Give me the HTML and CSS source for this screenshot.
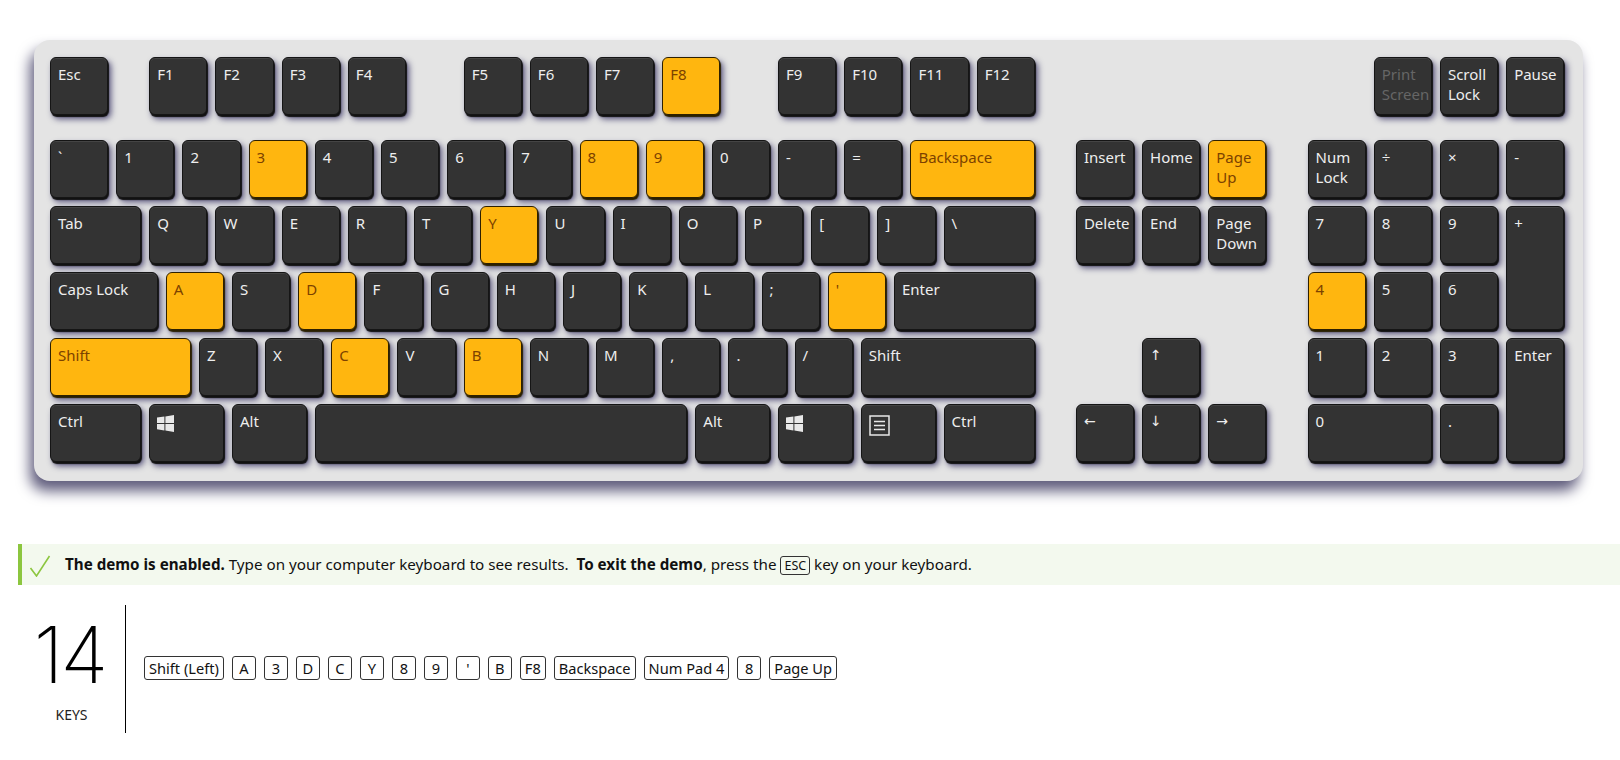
FILE: index.html
```html
<!DOCTYPE html>
<html lang="en">
<head>
    <meta charset="UTF-8">
    <title>Keyboard demo</title>
    <link rel="stylesheet" href="styles.css">
</head>
<body>
    <div class="keyboard">
        <!-- Function row -->
        <div class="key-grid fn-row">
            <div class="key s4">Esc</div><div class="s2"></div>
            <div class="key s4">F1</div><div class="key s4">F2</div><div class="key s4">F3</div><div class="key s4">F4</div><div class="s3"></div>
            <div class="key s4">F5</div><div class="key s4">F6</div><div class="key s4">F7</div><div class="key s4 on">F8</div><div class="s3"></div>
            <div class="key s4">F9</div><div class="key s4">F10</div><div class="key s4">F11</div><div class="key s4">F12</div><div class="s20"></div>
            <div class="key s4 dim">Print Screen</div><div class="key s4">Scroll Lock</div><div class="key s4">Pause</div>
        </div>

        <div class="key-grid">
            <!-- Number row -->
            <div class="key s4">`</div><div class="key s4">1</div><div class="key s4">2</div><div class="key s4 on">3</div><div class="key s4">4</div><div class="key s4">5</div><div class="key s4">6</div><div class="key s4">7</div><div class="key s4 on">8</div><div class="key s4 on">9</div><div class="key s4">0</div><div class="key s4">-</div><div class="key s4">=</div><div class="key s8 on">Backspace</div><div class="s2"></div>
            <div class="key s4">Insert</div><div class="key s4">Home</div><div class="key s4 on">Page Up</div><div class="s2"></div>
            <div class="key s4">Num Lock</div><div class="key s4">÷</div><div class="key s4">×</div><div class="key s4">-</div>

            <!-- QWERTY row -->
            <div class="key s6">Tab</div><div class="key s4">Q</div><div class="key s4">W</div><div class="key s4">E</div><div class="key s4">R</div><div class="key s4">T</div><div class="key s4 on">Y</div><div class="key s4">U</div><div class="key s4">I</div><div class="key s4">O</div><div class="key s4">P</div><div class="key s4">[</div><div class="key s4">]</div><div class="key s6">\</div><div class="s2"></div>
            <div class="key s4">Delete</div><div class="key s4">End</div><div class="key s4">Page Down</div><div class="s2"></div>
            <div class="key s4">7</div><div class="key s4">8</div><div class="key s4">9</div><div class="key s4 tall">+</div>

            <!-- Home row -->
            <div class="key s7">Caps Lock</div><div class="key s4 on">A</div><div class="key s4">S</div><div class="key s4 on">D</div><div class="key s4">F</div><div class="key s4">G</div><div class="key s4">H</div><div class="key s4">J</div><div class="key s4">K</div><div class="key s4">L</div><div class="key s4">;</div><div class="key s4 on">'</div><div class="key s9">Enter</div><div class="s16"></div>
            <div class="key s4 on">4</div><div class="key s4">5</div><div class="key s4">6</div>

            <!-- Shift row -->
            <div class="key s9 on">Shift</div><div class="key s4">Z</div><div class="key s4">X</div><div class="key s4 on">C</div><div class="key s4">V</div><div class="key s4 on">B</div><div class="key s4">N</div><div class="key s4">M</div><div class="key s4">,</div><div class="key s4">.</div><div class="key s4">/</div><div class="key s11">Shift</div><div class="s6"></div>
            <div class="key s4 arrow">↑</div><div class="s6"></div>
            <div class="key s4">1</div><div class="key s4">2</div><div class="key s4">3</div><div class="key s4 tall">Enter</div>

            <!-- Bottom row -->
            <div class="key s6">Ctrl</div>
            <div class="key s5">
                <svg class="win-icon" viewBox="0 0 17 17"><path d="M0 2.6 7.4 1.5V8H0ZM8.4 1.4 17 0V8H8.4ZM0 9H7.4V15.4L0 14.3ZM8.4 9H17V17L8.4 15.6Z"/></svg>
            </div>
            <div class="key s5">Alt</div><div class="key s23"></div><div class="key s5">Alt</div>
            <div class="key s5">
                <svg class="win-icon" viewBox="0 0 17 17"><path d="M0 2.6 7.4 1.5V8H0ZM8.4 1.4 17 0V8H8.4ZM0 9H7.4V15.4L0 14.3ZM8.4 9H17V17L8.4 15.6Z"/></svg>
            </div>
            <div class="key s5">
                <svg class="menu-icon" viewBox="0 0 21 21"><path d="M1 1H20V20H1ZM5 6.5H16M5 10.5H16M5 14.5H16"/></svg>
            </div>
            <div class="key s6">Ctrl</div><div class="s2"></div>
            <div class="key s4 arrow">←</div><div class="key s4 arrow">↓</div><div class="key s4 arrow">→</div><div class="s2"></div>
            <div class="key s8">0</div><div class="key s4">.</div>
        </div>
    </div>

    <div class="notice">
        <svg class="notice-check" viewBox="0 0 22 22"><path d="M1.5 13 7.5 21 20.5 1"/></svg>
        <p><b>The demo is enabled.</b> Type on your computer keyboard to see results. &nbsp;<b>To exit the demo</b>, press the <kbd class="esc">ESC</kbd> key on your keyboard.</p>
    </div>

    <div class="results">
        <div class="count">
            <div class="count-num">14</div>
            <div class="count-label">KEYS</div>
        </div>
        <div class="chips">
            <kbd>Shift (Left)</kbd><kbd>A</kbd><kbd>3</kbd><kbd>D</kbd><kbd>C</kbd><kbd>Y</kbd><kbd>8</kbd><kbd>9</kbd><kbd>'</kbd><kbd>B</kbd><kbd>F8</kbd><kbd>Backspace</kbd><kbd>Num Pad 4</kbd><kbd>8</kbd><kbd>Page Up</kbd>
        </div>
    </div>
</body>
</html>
```

FILE: styles.css
```css
* {
    box-sizing: border-box;
}
html, body {
    height: 100%;
}
body {
    margin: 0;
    overflow: hidden;
    background: #fff;
    color: #111;
    font-family: "Noto Sans", "Open Sans", sans-serif;
}
.keyboard {
    width: 1549px;
    height: 441px;
    margin: 40px 0 0 34px;
    padding: 17px 0 0 16px;
    background: #e4e4e4;
    border-radius: 16px;
    box-shadow: -4px 10px 14px #5f5c7c;
}
.key-grid {
    display: grid;
    grid-template-columns: repeat(92, 16.56px);
    grid-auto-rows: 66px;
}
.fn-row {
    margin-bottom: 17px;
}
.key {
    margin: 0 8px 8px 0;
    padding: 6px 7px;
    background: #333;
    border: 1px solid #151515;
    border-radius: 6px;
    box-shadow: 1px 2px 1px #111, 3px 4px 6px #55517a, inset 0 1px 0 #444;
    color: #eee;
    font-size: 15px;
    line-height: 20px;
}
.key.on {
    background: #ffb60f;
    border-color: #2e2000;
    box-shadow: 1px 2px 1px #2a2000, 3px 4px 6px #55517a;
    color: #7c4200;
}
.key.dim {
    color: #666;
}
.arrow {
    font-family: "DejaVu Sans", sans-serif;
    font-size: 14px;
}
.tall {
    grid-row: span 2;
}
.s2 { grid-column: span 2; }
.s3 { grid-column: span 3; }
.s4 { grid-column: span 4; }
.s5 { grid-column: span 5; }
.s6 { grid-column: span 6; }
.s7 { grid-column: span 7; }
.s8 { grid-column: span 8; }
.s9 { grid-column: span 9; }
.s11 { grid-column: span 11; }
.s16 { grid-column: span 16; }
.s20 { grid-column: span 20; }
.s23 { grid-column: span 23; }
.win-icon {
    display: block;
    width: 17px;
    height: 17px;
    margin-top: 4px;
    fill: #e8e8e8;
}
.menu-icon {
    display: block;
    width: 21px;
    height: 21px;
    margin-top: 4px;
    fill: none;
    stroke: #e8e8e8;
    stroke-width: 1.5;
}
.notice {
    display: flex;
    align-items: center;
    height: 41px;
    margin: 63px 0 0 18px;
    padding-left: 7px;
    background: #f3f9ee;
    border-left: 4px solid #8cc63f;
}
.notice-check {
    width: 22px;
    height: 22px;
    margin: 2px 14px 0 0;
    fill: none;
    stroke: #8cc63f;
    stroke-width: 1.6;
}
.notice p {
    margin: -2px 0 0;
    font-size: 15.2px;
}
.esc {
    padding: 0 3px;
    border: 1px solid #333;
    border-radius: 3px;
    font-family: inherit;
    font-size: 12.5px;
}
.results {
    display: flex;
    align-items: center;
    margin: 20px 0 0 18px;
}
.count {
    width: 108px;
    height: 128px;
    border-right: 1px solid #000;
    text-align: center;
}
.count-num {
    margin: 4px 0 0 -4px;
    font-family: Inter, sans-serif;
    font-weight: 200;
    font-size: 78px;
    line-height: 92px;
    letter-spacing: -3px;
    color: #000;
}
.count-label {
    margin-top: 4px;
    font-size: 14px;
    color: #222;
}
.chips {
    display: flex;
    gap: 8px;
    margin: -2px 0 0 18px;
}
.chips kbd {
    padding: 1px 4px;
    min-width: 24px;
    height: 24px;
    border: 1px solid #333;
    border-radius: 3px;
    font-family: inherit;
    font-size: 14.6px;
    line-height: 20px;
    text-align: center;
}
```
